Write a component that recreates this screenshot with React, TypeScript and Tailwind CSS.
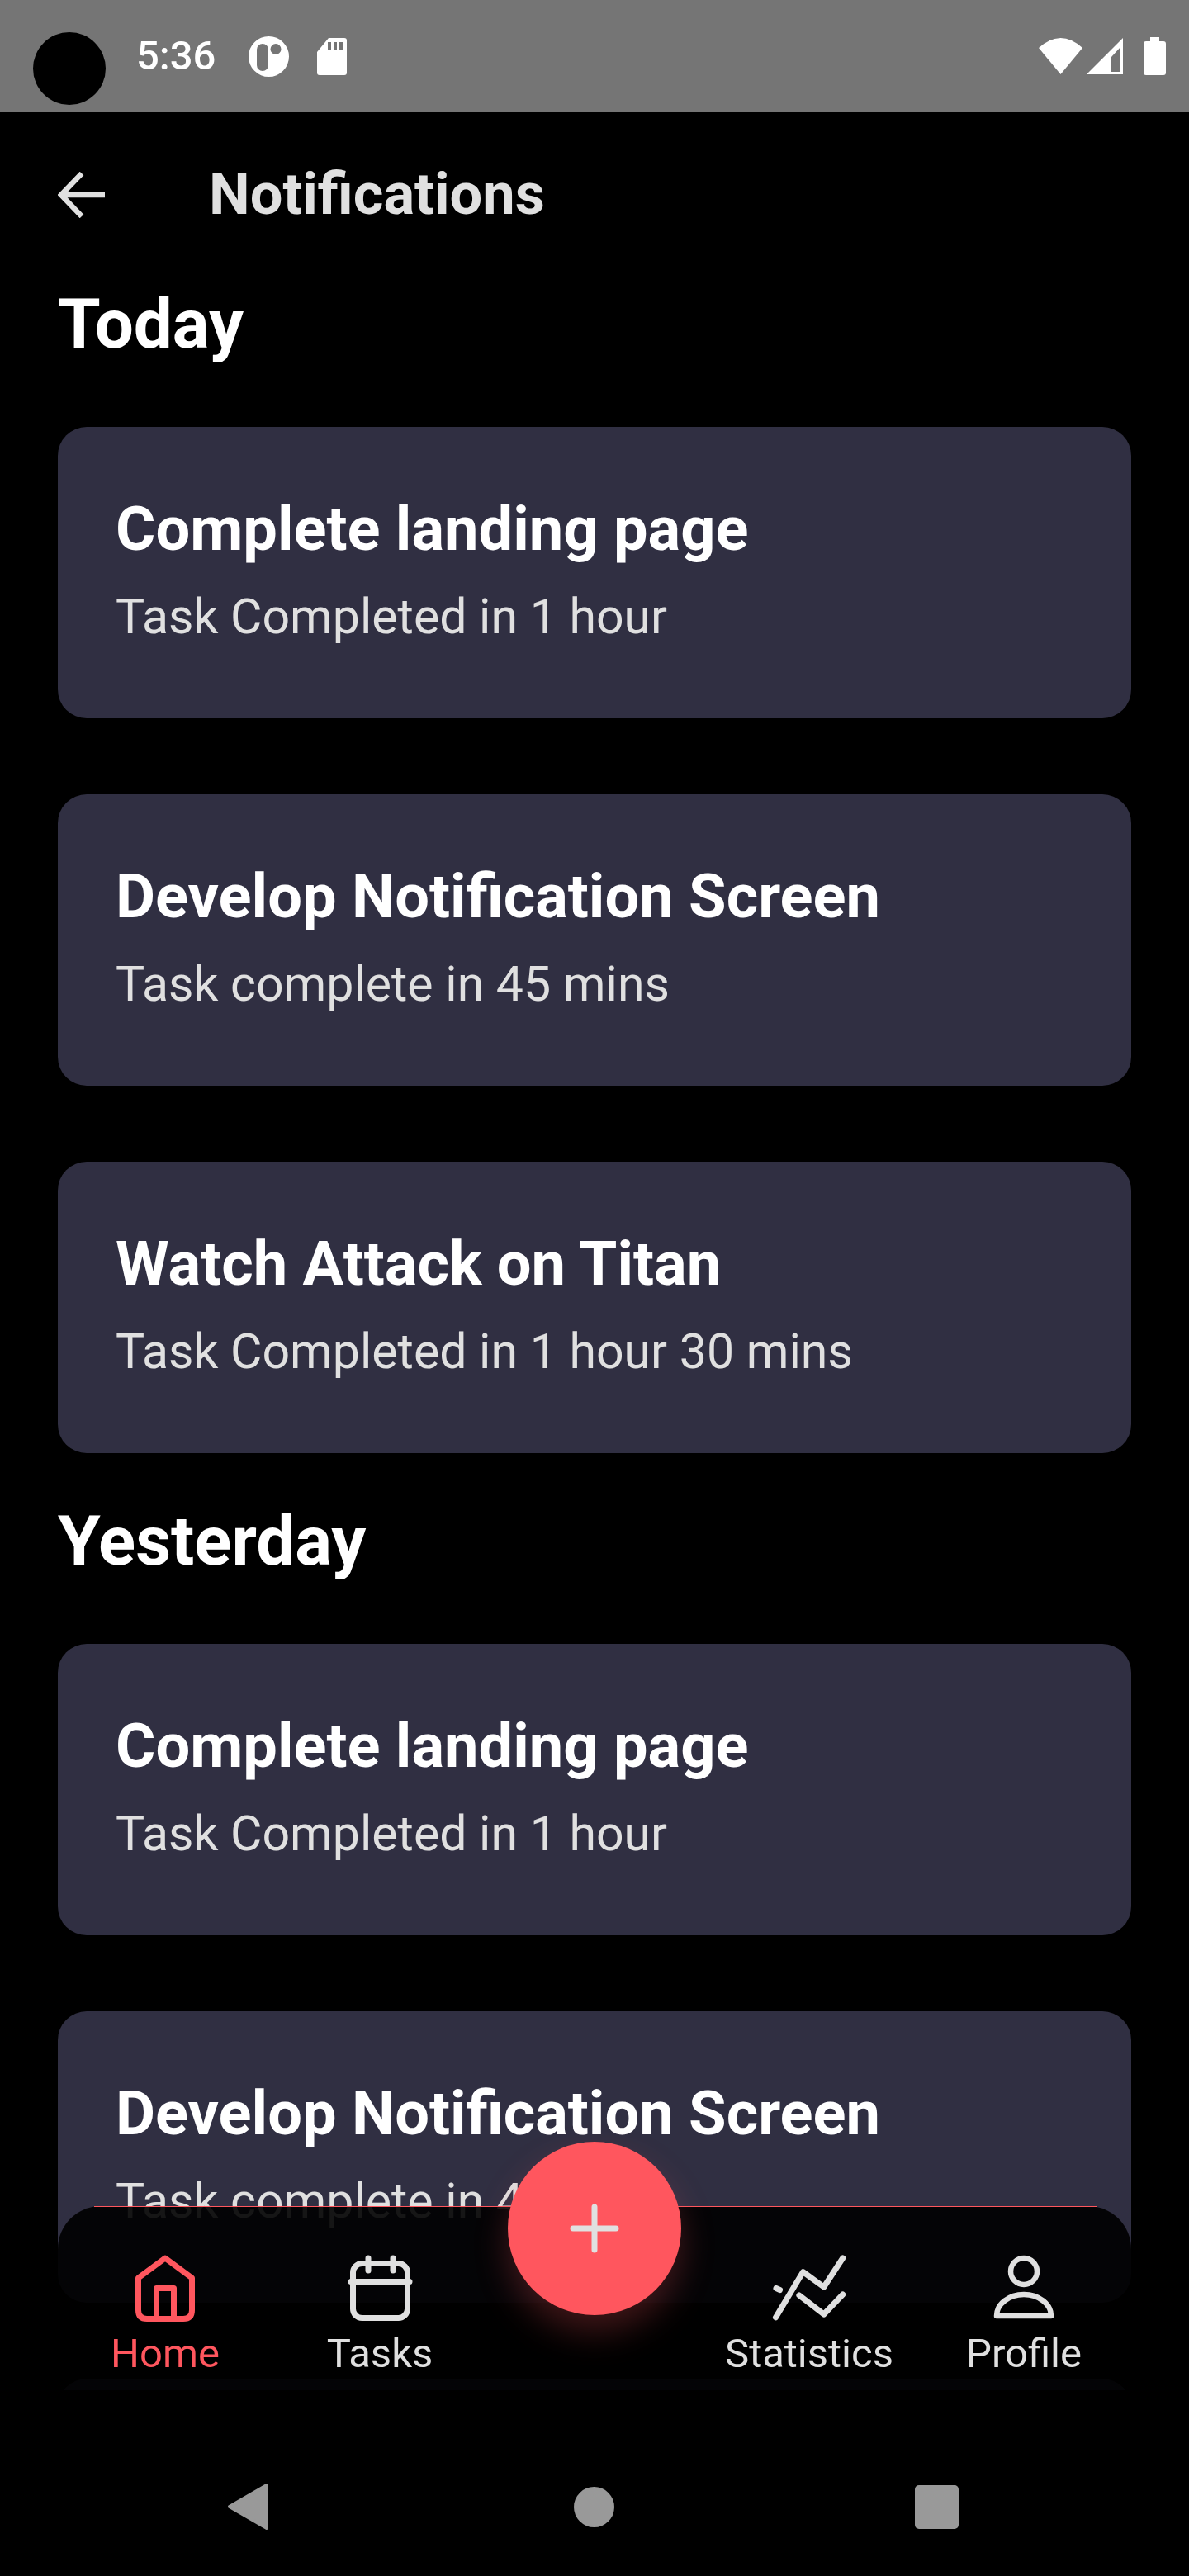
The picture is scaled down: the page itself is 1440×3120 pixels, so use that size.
function Card({ title, sub }: { title?: string; sub?: string }) {
  return (
    <div className="shrink-0 rounded-[35px] bg-[#302f42] h-[353px] pl-[70px] pt-[81px]">
      {title && <div className="text-[74px] leading-[86px] font-bold text-white">{title}</div>}
      {sub && <div className="text-[59px] leading-[70px] mt-[28px] text-[#e0e0e0]">{sub}</div>}
    </div>
  );
}

function HomeIcon() {
  return (
    <svg width="80" height="84" viewBox="0 0 80 84" fill="none" stroke="#ff565e" strokeWidth="7" strokeLinejoin="round">
      <path d="M40 5 L72.5 29 V68 Q72.5 78.5 62 78.5 H18 Q7.5 78.5 7.5 68 V29 Z" />
      <path d="M29.5 78.5 V41.5 H50.5 V78.5" />
    </svg>
  );
}

function TasksIcon() {
  return (
    <svg width="80" height="84" viewBox="0 0 80 84" fill="none" stroke="#e0e0e0" strokeWidth="7" strokeLinecap="round">
      <rect x="7.5" y="11.5" width="66" height="66" rx="11" />
      <path d="M5 33.5 H76 M26 5 V20 M56 5 V20" />
    </svg>
  );
}

function StatsIcon() {
  return (
    <svg width="90" height="84" viewBox="0 0 90 84" fill="none" stroke="#e0e0e0" strokeWidth="7" strokeLinecap="round" strokeLinejoin="round">
      <path d="M85.7 5 L62.8 40 L37.5 21.7 L4.5 76.7" />
      <path d="M32.9 50 L62.8 73 L85.7 49" />
      <path d="M5 41.5 L9.5 43.5" />
    </svg>
  );
}

function ProfileIcon() {
  return (
    <svg width="80" height="84" viewBox="0 0 80 84" fill="none" stroke="#e0e0e0" strokeWidth="6.5" strokeLinejoin="round">
      <circle cx="40" cy="21" r="16" />
      <path d="M7 75 A33 26 0 0 1 73 75 Z" />
    </svg>
  );
}

function NavItem({ icon, label, active }: { icon: React.ReactNode; label: string; active?: boolean }) {
  return (
    <div className="flex flex-col items-center pt-[58px]">
      <div className="flex h-[84px] items-center justify-center">{icon}</div>
      <span className={`text-[49px] leading-[58px] mt-[8px] ${active ? "text-[#ff565e]" : "text-[#e0e0e0]"}`}>{label}</span>
    </div>
  );
}

export default function App() {
  return (
    <div className="relative w-[1440px] h-[3120px] bg-black overflow-hidden font-['Roboto',sans-serif]">
      <div className="flex items-center h-[136px] bg-[#757575] pl-[40px] pr-[28px] text-white">
        <div className="w-[88px] h-[88px] rounded-full bg-black mt-[30px]" />
        <span className="ml-[37px] text-[49px] leading-[58px] font-medium">5:36</span>
        <svg className="ml-[40px]" width="49" height="49" viewBox="0 0 49 49" fill="white">
          <path fillRule="evenodd" d="M24.5 0a24.5 24.5 0 1 1 0 49a24.5 24.5 0 0 1 0-49ZM17 9a7 7 0 0 0-7 7v19a7 7 0 0 0 14 0V16a7 7 0 0 0-7-7ZM33 9a6.5 6.5 0 1 0 0 13a6.5 6.5 0 0 0 0-13Z" />
        </svg>
        <svg className="ml-[34px]" width="36" height="45" viewBox="0 0 36 45" fill="white">
          <path fillRule="evenodd" d="M14 0H33a3 3 0 0 1 3 3V42a3 3 0 0 1-3 3H3a3 3 0 0 1-3-3V17ZM13 5v10h4V5ZM20 5v10h4V5ZM27 5v10h4V5Z" />
        </svg>
        <div className="flex-1" />
        <svg width="53" height="44" viewBox="0 0 53 44" fill="white">
          <path d="M0 12Q26.5-12 53 12L26.5 44Z" />
        </svg>
        <svg className="ml-[5px]" width="44" height="44" viewBox="0 0 44 44" fill="white">
          <path fillRule="evenodd" d="M44 0V44H0ZM41 11L30 23V41H41Z" />
        </svg>
        <svg className="ml-[25px]" width="27" height="46" viewBox="0 0 27 46" fill="white">
          <path d="M8 0H19V5H24a3 3 0 0 1 3 3V43a3 3 0 0 1-3 3H3a3 3 0 0 1-3-3V8a3 3 0 0 1 3-3H8Z" />
        </svg>
      </div>

      <div className="flex items-center h-[100px] mt-[50px] pl-[70px]">
        <svg width="58" height="56" viewBox="0 0 58 56" fill="none" stroke="#e0e0e0" strokeWidth="6.5">
          <path d="M29 2 L4 28 L29 54 M4 28 H57" />
        </svg>
        <span className="ml-[125px] text-[70.4px] font-bold text-[#e0e0e0]">Notifications</span>
      </div>

      <div className="h-[2609px] overflow-hidden px-[70px]">
        <div className="text-[83.5px] leading-[98px] font-bold text-white mt-[58px]">Today</div>
        <div className="flex flex-col gap-[92px] mt-[75px]">
          <Card title="Complete landing page" sub="Task Completed in 1 hour" />
          <Card title="Develop Notification Screen" sub="Task complete in 45 mins" />
          <Card title="Watch Attack on Titan" sub="Task Completed in 1 hour 30 mins" />
        </div>
        <div className="text-[83.5px] leading-[98px] font-bold text-white mt-[58px]">Yesterday</div>
        <div className="flex flex-col gap-[92px] mt-[75px]">
          <Card title="Complete landing page" sub="Task Completed in 1 hour" />
          <Card title="Develop Notification Screen" sub="Task complete in 45 mins" />
          <Card />
        </div>
      </div>

      <div className="absolute left-[70px] top-[2672px] w-[1300px] h-[258px] rounded-[52px] bg-black/90 grid grid-cols-5">
        <div className="absolute left-[44px] right-[42px] top-0 h-px bg-[#ff565e]" />
        <NavItem icon={<HomeIcon />} label="Home" active />
        <NavItem icon={<TasksIcon />} label="Tasks" />
        <div className="relative">
          <button className="absolute left-1/2 top-[-78px] -translate-x-1/2 w-[210px] h-[210px] rounded-full bg-[#ff565e] flex items-center justify-center shadow-[0_20px_40px_rgba(255,86,94,0.25)]">
            <svg width="60" height="60" viewBox="0 0 60 60" fill="none" stroke="#e0e0e0" strokeWidth="7" strokeLinecap="round">
              <path d="M4 30 H56 M30 4 V56" />
            </svg>
          </button>
        </div>
        <NavItem icon={<StatsIcon />} label="Statistics" />
        <NavItem icon={<ProfileIcon />} label="Profile" />
      </div>

      <div className="absolute left-0 bottom-0 w-full h-[168px] flex items-center">
        <svg className="ml-[276px]" width="49" height="56" viewBox="0 0 49 56" fill="#999999" stroke="#999999" strokeWidth="4" strokeLinejoin="round">
          <path d="M47 2 V54 L2 28 Z" />
        </svg>
        <div className="ml-[370px] w-[49px] h-[49px] rounded-full bg-[#999999]" />
        <div className="ml-[364px] w-[53px] h-[53px] rounded-[5px] bg-[#999999]" />
      </div>
    </div>
  );
}
